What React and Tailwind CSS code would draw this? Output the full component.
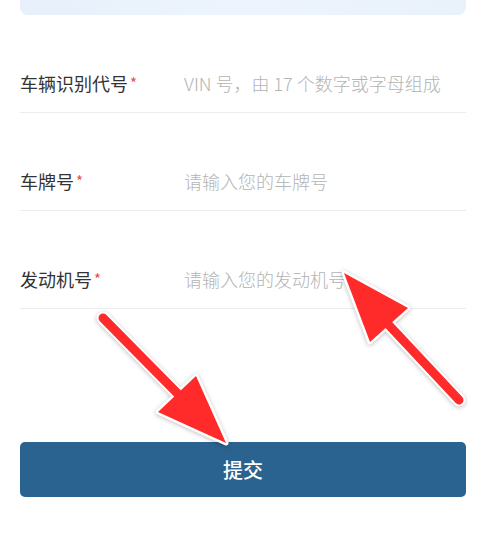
import React from 'react';

const font = { fontFamily: '"Noto Sans CJK SC", "Noto Sans", sans-serif' };

function Field({ label, placeholder }) {
  return (
    <div className="flex items-center border-b border-[#ececec] pt-[56px] pb-[17px]">
      <label className="w-[164px] shrink-0 text-[18px] leading-[24px] text-[#333333]">
        {label}
        <span className="ml-[2px] text-[15px] align-top text-[#ef4a4f]">*</span>
      </label>
      <input
        type="text"
        placeholder={placeholder}
        className="flex-1 min-w-0 bg-transparent text-[18px] font-light leading-[24px] text-[#333333] outline-none placeholder:text-[#b4b4b4]"
      />
    </div>
  );
}

function Arrow({ tail, neck, tip, left, right }) {
  const head = `${tip[0]},${tip[1]} ${left[0]},${left[1]} ${right[0]},${right[1]}`;
  return (
    <g>
      <line x1={tail[0]} y1={tail[1]} x2={neck[0]} y2={neck[1]} stroke="#ffffff" strokeWidth="13" strokeLinecap="round" />
      <polygon points={head} fill="#ffffff" stroke="#ffffff" strokeWidth="5" strokeLinejoin="round" />
      <line x1={tail[0]} y1={tail[1]} x2={neck[0]} y2={neck[1]} stroke="#ff2a2a" strokeWidth="9" strokeLinecap="round" />
      <polygon points={head} fill="#ff2a2a" />
    </g>
  );
}

export default function App() {
  return (
    <div className="relative w-[480px] min-h-[533px] bg-white pl-5 pr-[14px]" style={font}>
      {/* tail end of the info card above */}
      <div className="h-[15px] rounded-b-[8px] bg-gradient-to-r from-[#e7f0fb] via-[#edf4fd] to-[#e9f1fb]" />

      <form>
        <Field label="车辆识别代号" placeholder="VIN 号，由 17 个数字或字母组成" />
        <Field label="车牌号" placeholder="请输入您的车牌号" />
        <Field label="发动机号" placeholder="请输入您的发动机号" />

        <button
          type="button"
          className="mt-[133px] flex h-[55px] w-full items-center justify-center rounded-[5px] bg-[#2a6390] text-[20px] font-medium text-white"
        >
          提交
        </button>
      </form>

      {/* annotation arrows */}
      <svg
        className="pointer-events-none absolute inset-0"
        width="480"
        height="533"
        viewBox="0 0 480 533"
        style={{ filter: 'drop-shadow(0 1px 2px rgba(0,0,0,0.25))' }}
      >
        <Arrow tail={[103, 318]} neck={[182, 398]} tip={[226, 443]} left={[158, 412]} right={[196, 376]} />
        <Arrow tail={[459, 400]} neck={[386, 322]} tip={[344, 273]} left={[408, 308]} right={[370, 342]} />
      </svg>
    </div>
  );
}
